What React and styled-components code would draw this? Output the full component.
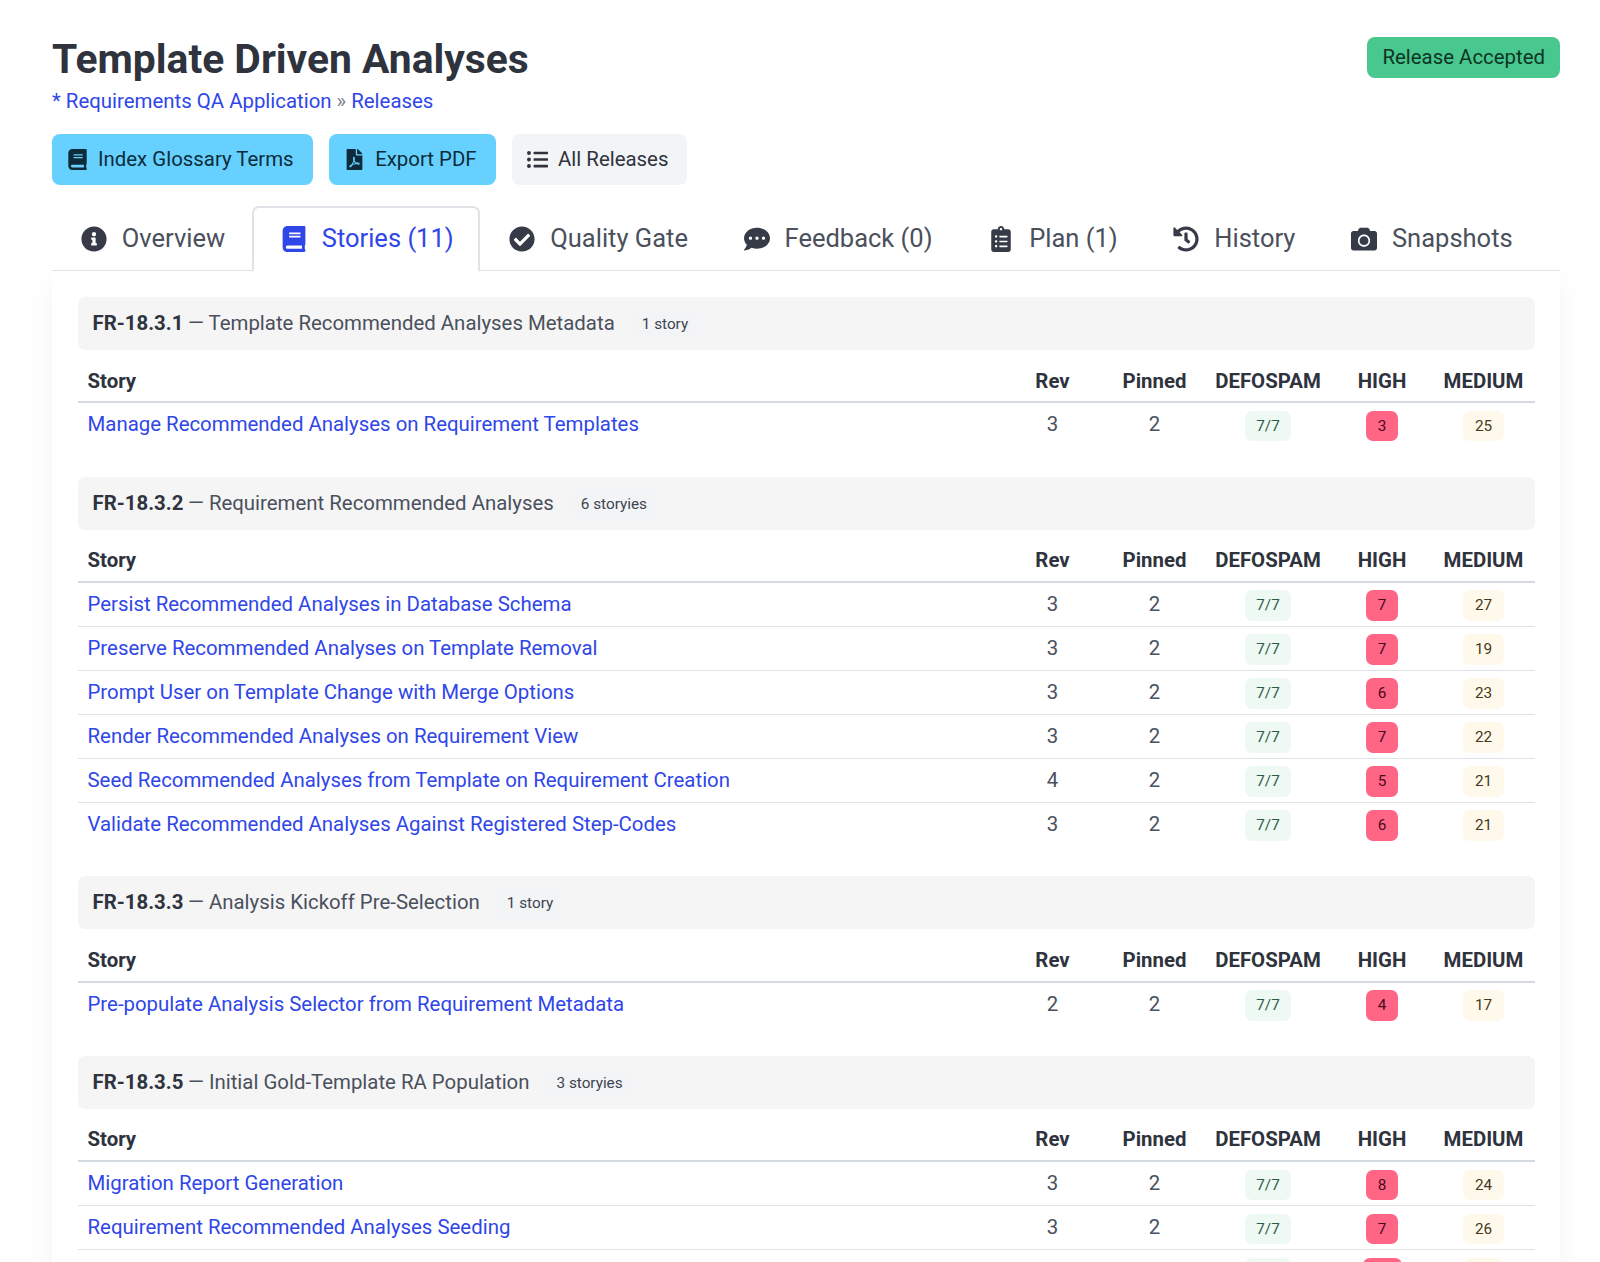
import React from 'react';
import styled, { createGlobalStyle } from 'styled-components';
import {
    FaBook, FaFilePdf, FaListUl, FaInfoCircle, FaCheckCircle,
    FaCommentDots, FaClipboardList, FaHistory, FaCamera
} from 'react-icons/fa';

const Global = createGlobalStyle`
    html, body {
        margin: 0;
        padding: 0;
        background: #fff;
        overflow: hidden;
    }
    body {
        font-family: Roboto, "Liberation Sans", sans-serif;
        font-size: 20.4px;
        line-height: 30.6px;
        color: #4a505c;
    }
    * { box-sizing: border-box; }
`;

const Page = styled('div')`
    height: 1262px;
    overflow: hidden;
    padding: 36px 40px 0 52px;
`;

const Head = styled('div')`
    display: flex;
    justify-content: space-between;
    align-items: flex-start;
`;

const Title = styled('h1')`
    margin: 0;
    font-size: 40.8px;
    line-height: 46px;
    font-weight: 700;
    color: #2e333d;
`;

const Crumbs = styled('div')`
    margin-top: 4px;
    color: #7a8090;
`;

const Link = styled('a')`
    color: #2f46e8;
    text-decoration: none;
`;

const StatusTag = styled('span')`
    display: inline-flex;
    align-items: center;
    height: 41px;
    margin-top: 1px;
    padding: 0 15px;
    border-radius: 8px;
    background: #48c78e;
    color: #0e3524;
`;

const Buttons = styled('div')`
    display: flex;
    gap: 16.5px;
    margin-top: 17px;
`;

const Button = styled('a')`
    display: inline-flex;
    align-items: center;
    height: 51px;
    padding: 0 19px 0 10px;
    border-radius: 8px;
    background: ${(p) => (p.$info ? '#66d1ff' : '#f3f4f6')};
    color: ${(p) => (p.$info ? '#0d2b3a' : '#2e333d')};
`;

const ButtonIcon = styled('span')`
    display: inline-flex;
    justify-content: center;
    width: 30px;
    margin-right: 6px;
    font-size: 21px;
`;

const Tabs = styled('ul')`
    display: flex;
    height: 66px;
    margin: 21px 0 0;
    padding: 0;
    list-style: none;
    border-bottom: 2.5px solid #dfe2e7;
`;

const Tab = styled('li')`
    display: flex;
    flex-shrink: 0;
    align-items: center;
    height: 66px;
    padding: 0 24.8px;
    font-size: 25.5px;
    white-space: nowrap;
    color: ${(p) => (p.$active ? '#2f46e8' : '#4a505c')};
    background: ${(p) => (p.$active ? '#fff' : 'transparent')};
    border: 2.5px solid ${(p) => (p.$active ? '#dfe2e7' : 'transparent')};
    border-bottom-color: ${(p) => (p.$active ? '#fff' : 'transparent')};
    border-radius: 7px 7px 0 0;
`;

const TabIcon = styled('span')`
    display: inline-flex;
    justify-content: center;
    width: 30px;
    margin-right: 13px;
    font-size: 26px;
    color: ${(p) => (p.$active ? '#2f46e8' : '#363b47')};
`;

const Card = styled('div')`
    padding: 26px 25.5px;
    margin-top: -0.5px;
    background: #fff;
    border-radius: 0 0 10px 10px;
    box-shadow: 0 12px 30px rgba(20, 30, 50, 0.05);
`;

const Group = styled('section')`
    margin-bottom: 29.3px;
`;

const GroupHead = styled('div')`
    display: flex;
    align-items: center;
    height: 53px;
    margin-bottom: 9px;
    padding: 0 15px;
    border-radius: 7px;
    background: #f5f5f5;
`;

const GroupCode = styled('strong')`
    font-weight: 700;
    color: #2e333d;
    margin-right: 4.5px;
`;

const CountTag = styled('span')`
    display: inline-flex;
    align-items: center;
    height: 30.6px;
    margin: 2px 0 0 15px;
    padding: 0 12px;
    border-radius: 7px;
    background: #f3f4f6;
    font-size: 15.3px;
    color: #3d4350;
`;

const Table = styled('table')`
    width: 100%;
    table-layout: fixed;
    border-collapse: separate;
    border-spacing: 0;
`;

const Th = styled('th')`
    height: 44.3px;
    padding: 1.5px ${(p) => (p.$first ? '10px' : '0')} 0;
    font-weight: 700;
    color: #2e333d;
    white-space: nowrap;
    text-align: ${(p) => (p.$first ? 'left' : 'center')};
    border-bottom: 2.3px solid #d5d9e0;
`;

const Td = styled('td')`
    height: 44px;
    padding: 6px ${(p) => (p.$first ? '10px' : '0')} 0;
    vertical-align: top;
    text-align: ${(p) => (p.$first ? 'left' : 'center')};
    tr:not(:last-child) > & {
        border-bottom: 1.3px solid #dfe2e7;
    }
`;

const Tag = styled('span')`
    display: inline-flex;
    align-items: center;
    justify-content: center;
    height: 30.6px;
    min-width: ${(p) => p.$min}px;
    margin-top: 1.5px;
    padding: 0 11.5px;
    border-radius: 7px;
    font-size: 15.3px;
    vertical-align: top;
    background: ${(p) => ({ ok: '#eef9f4', high: '#ff6685', med: '#fff9eb' }[p.$kind])};
    color: ${(p) => ({ ok: '#2f5c48', high: '#4a0a1a', med: '#453a20' }[p.$kind])};
`;

// the last story of FR-18.3.5 falls under the fold, only its tags peek in
const groups = [
    {
        code: 'FR-18.3.1',
        name: 'Template Recommended Analyses Metadata',
        count: '1 story',
        rows: [
            ['Manage Recommended Analyses on Requirement Templates', 3, 3, 25]
        ]
    },
    {
        code: 'FR-18.3.2',
        name: 'Requirement Recommended Analyses',
        count: '6 storyies',
        rows: [
            ['Persist Recommended Analyses in Database Schema', 3, 7, 27],
            ['Preserve Recommended Analyses on Template Removal', 3, 7, 19],
            ['Prompt User on Template Change with Merge Options', 3, 6, 23],
            ['Render Recommended Analyses on Requirement View', 3, 7, 22],
            ['Seed Recommended Analyses from Template on Requirement Creation', 4, 5, 21],
            ['Validate Recommended Analyses Against Registered Step-Codes', 3, 6, 21]
        ]
    },
    {
        code: 'FR-18.3.3',
        name: 'Analysis Kickoff Pre-Selection',
        count: '1 story',
        rows: [
            ['Pre-populate Analysis Selector from Requirement Metadata', 2, 4, 17]
        ]
    },
    {
        code: 'FR-18.3.5',
        name: 'Initial Gold-Template RA Population',
        count: '3 storyies',
        rows: [
            ['Migration Report Generation', 3, 8, 24],
            ['Requirement Recommended Analyses Seeding', 3, 7, 26],
            ['', '', '', '']
        ]
    }
];

const tabs = [
    { label: 'Overview', Icon: FaInfoCircle },
    { label: 'Stories (11)', Icon: FaBook, active: true },
    { label: 'Quality Gate', Icon: FaCheckCircle },
    { label: 'Feedback (0)', Icon: FaCommentDots },
    { label: 'Plan (1)', Icon: FaClipboardList },
    { label: 'History', Icon: FaHistory },
    { label: 'Snapshots', Icon: FaCamera }
];

const StoryGroup = ({ group }) => (
    <Group>
        <GroupHead>
            <GroupCode>{group.code}</GroupCode>
            <span>— {group.name}</span>
            <CountTag>{group.count}</CountTag>
        </GroupHead>
        <Table>
            <colgroup>
                <col />
                <col width='104' />
                <col width='100' />
                <col width='127' />
                <col width='101' />
                <col width='102' />
            </colgroup>
            <thead>
                <tr>
                    <Th $first>Story</Th>
                    <Th>Rev</Th>
                    <Th>Pinned</Th>
                    <Th>DEFOSPAM</Th>
                    <Th>HIGH</Th>
                    <Th>MEDIUM</Th>
                </tr>
            </thead>
            <tbody>
                {group.rows.map(([story, rev, high, medium], i) => (
                    <tr key={i}>
                        <Td $first><Link>{story}</Link></Td>
                        <Td>{rev}</Td>
                        <Td>{story && 2}</Td>
                        <Td><Tag $kind='ok' $min={46}>{story && '7/7'}</Tag></Td>
                        <Td><Tag $kind='high' $min={story ? 32 : 39}>{high}</Tag></Td>
                        <Td><Tag $kind='med' $min={39}>{medium}</Tag></Td>
                    </tr>
                ))}
            </tbody>
        </Table>
    </Group>
);

export default function App() {
    return (
        <Page>
            <Global />
            <Head>
                <div>
                    <Title>Template Driven Analyses</Title>
                    <Crumbs>
                        <Link>* Requirements QA Application</Link> » <Link>Releases</Link>
                    </Crumbs>
                </div>
                <StatusTag>Release Accepted</StatusTag>
            </Head>
            <Buttons>
                <Button $info><ButtonIcon><FaBook /></ButtonIcon>Index Glossary Terms</Button>
                <Button $info><ButtonIcon><FaFilePdf /></ButtonIcon>Export PDF</Button>
                <Button><ButtonIcon><FaListUl /></ButtonIcon>All Releases</Button>
            </Buttons>
            <Tabs>
                {tabs.map(({ label, Icon, active }) => (
                    <Tab key={label} $active={active}>
                        <TabIcon $active={active}><Icon /></TabIcon>
                        {label}
                    </Tab>
                ))}
            </Tabs>
            <Card>
                {groups.map((group) => <StoryGroup key={group.code} group={group} />)}
            </Card>
        </Page>
    );
}
